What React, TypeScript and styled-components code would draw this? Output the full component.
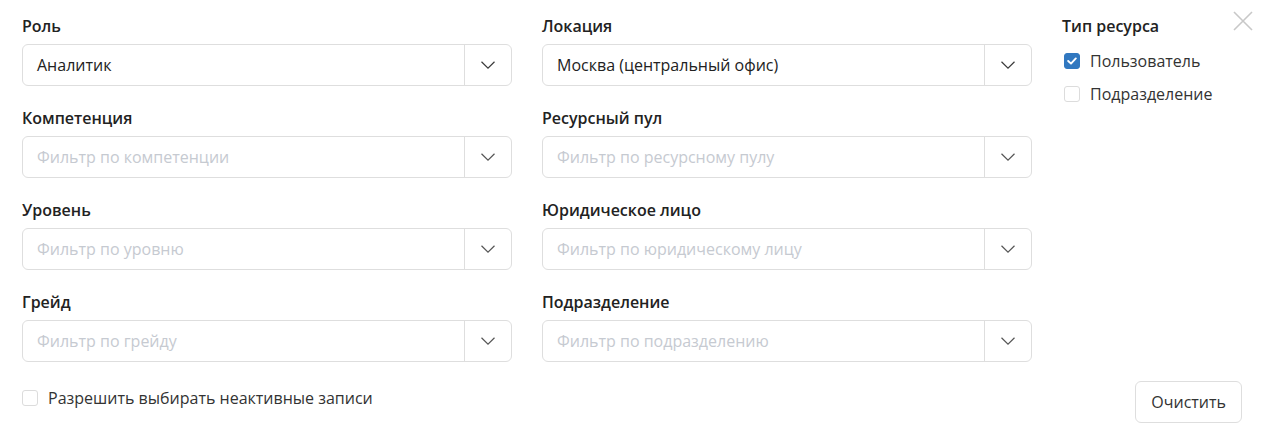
import React from "react";
import styled, { createGlobalStyle } from "styled-components";

const Global = createGlobalStyle`
  html, body { margin: 0; padding: 0; background: #fff; overflow: hidden; }
  body { font-family: "Open Sans", "Noto Sans", sans-serif; color: #222; }
  * { box-sizing: border-box; }
`;

const Panel = styled.div`
  position: relative;
  width: 1263px;
  height: 438px;
  padding: 14px 21px 0 22px;
  display: flex;
  flex-direction: column;
`;

const Grid = styled.div`
  display: grid;
  grid-template-columns: 490px 490px 1fr;
  column-gap: 30px;
`;

const Column = styled.div`
  display: flex;
  flex-direction: column;
  gap: 20px;
`;

const Field = styled.div`
  display: flex;
  flex-direction: column;
`;

const Label = styled.div`
  font-size: 16px;
  font-weight: 600;
  line-height: 24px;
  margin-bottom: 6px;
  color: #222;
`;

const SelectBox = styled.div`
  display: flex;
  height: 42px;
  border: 1px solid #dedede;
  border-radius: 6px;
  background: #fff;
`;

const Value = styled.div<{ $placeholder?: boolean }>`
  flex: 1;
  display: flex;
  align-items: center;
  padding-left: 14px;
  font-size: 16px;
  color: ${(p) => (p.$placeholder ? "#c6cad1" : "#222")};
`;

const Toggle = styled.div`
  width: 47px;
  border-left: 1px solid #dedede;
  display: flex;
  align-items: center;
  justify-content: center;
`;

const CheckList = styled.div`
  display: flex;
  flex-direction: column;
  gap: 9px;
  margin-top: 5px;
  padding-left: 1px;
`;

const CheckRow = styled.label`
  display: flex;
  align-items: center;
  gap: 10px;
  font-size: 16px;
  line-height: 24px;
  color: #333;
`;

const Box = styled.span<{ $checked?: boolean }>`
  width: 16px;
  height: 16px;
  border-radius: 3px;
  display: inline-flex;
  align-items: center;
  justify-content: center;
  margin-left: 1px;
  background: ${(p) => (p.$checked ? "#3178c0" : "#fff")};
  border: 1px solid ${(p) => (p.$checked ? "#3178c0" : "#dcdcdc")};
`;

const Footer = styled.div`
  display: flex;
  align-items: center;
  justify-content: space-between;
  margin-top: 19px;
`;

const FooterOption = styled.div`
  padding-bottom: 8px;
  margin-left: -1px;
`;

const Button = styled.button`
  height: 42px;
  padding: 0 15px;
  font-family: inherit;
  font-size: 16px;
  color: #333;
  background: #fff;
  border: 1px solid #dedede;
  border-radius: 6px;
`;

const Close = styled.button`
  position: absolute;
  top: 9px;
  right: 8px;
  width: 24px;
  height: 24px;
  padding: 0;
  border: none;
  background: none;
  display: flex;
  align-items: center;
  justify-content: center;
`;

const Chevron = ({ dark }: { dark?: boolean }) => (
  <svg width="16" height="10" viewBox="0 0 16 10">
    <path d="M1.5 1.8 L8 8.2 L14.5 1.8" fill="none" stroke={dark ? "#3a3a3a" : "#555"} strokeWidth="1.2" />
  </svg>
);

const Check = ({ checked, children }: { checked?: boolean; children: React.ReactNode }) => (
  <CheckRow>
    <Box $checked={checked}>
      {checked && (
        <svg width="10" height="8" viewBox="0 0 10 8">
          <path d="M1.2 4 L4 6.6 L8.8 1.4" fill="none" stroke="#fff" strokeWidth="1.9" strokeLinecap="round" strokeLinejoin="round" />
        </svg>
      )}
    </Box>
    {children}
  </CheckRow>
);

type F = { label: string; value?: string; placeholder?: string };

const Select = ({ label, value, placeholder }: F) => (
  <Field>
    <Label>{label}</Label>
    <SelectBox>
      <Value $placeholder={!value}>{value ?? placeholder}</Value>
      <Toggle>
        <Chevron dark={!!value} />
      </Toggle>
    </SelectBox>
  </Field>
);

const col1: F[] = [
  { label: "Роль", value: "Аналитик" },
  { label: "Компетенция", placeholder: "Фильтр по компетенции" },
  { label: "Уровень", placeholder: "Фильтр по уровню" },
  { label: "Грейд", placeholder: "Фильтр по грейду" },
];

const col2: F[] = [
  { label: "Локация", value: "Москва (центральный офис)" },
  { label: "Ресурсный пул", placeholder: "Фильтр по ресурсному пулу" },
  { label: "Юридическое лицо", placeholder: "Фильтр по юридическому лицу" },
  { label: "Подразделение", placeholder: "Фильтр по подразделению" },
];

export default function App() {
  return (
    <>
      <Global />
      <Panel>
        <Close aria-label="Закрыть">
          <svg width="22" height="22" viewBox="0 0 22 22">
            <path d="M2 2 L20 20 M20 2 L2 20" stroke="#c8c8c8" strokeWidth="1.6" />
          </svg>
        </Close>
        <Grid>
          <Column>
            {col1.map((f) => (
              <Select key={f.label} {...f} />
            ))}
          </Column>
          <Column>
            {col2.map((f) => (
              <Select key={f.label} {...f} />
            ))}
          </Column>
          <Field>
            <Label>Тип ресурса</Label>
            <CheckList>
              <Check checked>Пользователь</Check>
              <Check>Подразделение</Check>
            </CheckList>
          </Field>
        </Grid>
        <Footer>
          <FooterOption>
            <Check>Разрешить выбирать неактивные записи</Check>
          </FooterOption>
          <Button>Очистить</Button>
        </Footer>
      </Panel>
    </>
  );
}
